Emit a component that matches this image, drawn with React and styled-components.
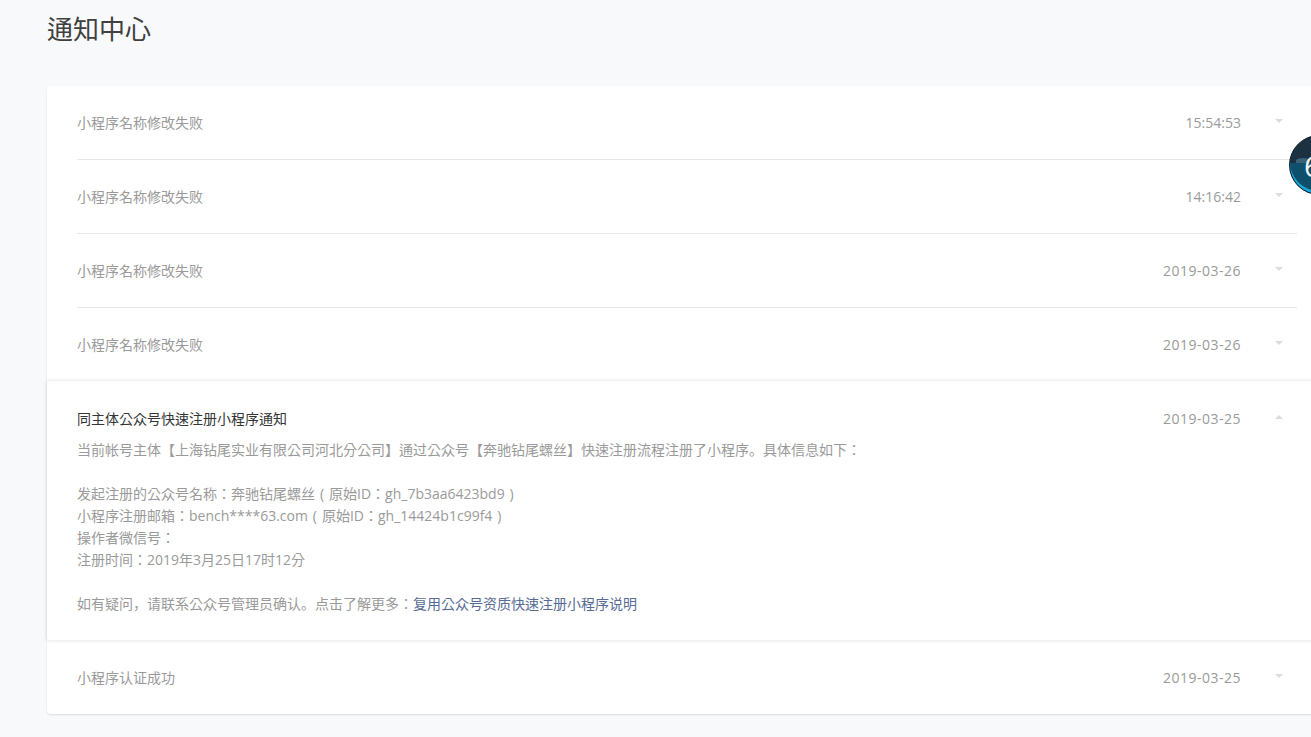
import React from "react";
import styled, { createGlobalStyle } from "styled-components";

const GlobalStyle = createGlobalStyle`
  html, body {
    margin: 0;
    padding: 0;
    height: 100%;
    overflow: hidden;
    background: #f8f9fb;
  }
  body {
    font-family: "Open Sans", "Noto Sans CJK KR", sans-serif;
    font-size: 14px;
    color: #999;
    text-spacing-trim: space-all;
  }
`;

const Page = styled.div`
  position: relative;
  width: 1311px;
  height: 737px;
  overflow: hidden;
  padding-left: 47px;
  box-sizing: border-box;
`;

const Title = styled.h1`
  margin: 0;
  height: 86px;
  padding-top: 11px;
  box-sizing: border-box;
  font-size: 26px;
  line-height: 36px;
  font-weight: 400;
  color: #404040;
`;

const List = styled.div`
  width: 1280px;
  background: #fff;
  border-radius: 4px;
  box-shadow: 0 1px 2px rgba(0, 0, 0, 0.12);
`;

const Item = styled.div`
  padding: 0 30px;
  ${(p) =>
    p.$open &&
    `
    position: relative;
    margin-top: -1px;
    border-radius: 2px;
    box-shadow: 0 0 4px rgba(0, 0, 0, 0.14);
    background: #fff;
  `}
`;

const Head = styled.div`
  height: 74px;
  box-sizing: border-box;
  display: flex;
  align-items: center;
  line-height: 20px;
  border-bottom: 1px solid ${(p) => (p.$line ? "#e7e7eb" : "transparent")};
  padding-top: ${(p) => (p.$low ? "2px" : "0")};
`;

const Name = styled.span`
  flex: 1;
  color: ${(p) => (p.$open ? "#353535" : "#9a9a9a")};
`;

const Time = styled.span`
  color: #9a9a9a;
  margin-right: 33px;
  letter-spacing: ${(p) => (p.$date ? "0.5px" : "0")};
`;

const Arrow = styled.span`
  width: 10px;
  height: 10px;
  margin-right: 13px;
  margin-top: -4px;
  display: flex;
  align-items: center;
  justify-content: center;
  &::before {
    content: "";
    width: 0;
    height: 0;
    border-left: 4px solid transparent;
    border-right: 4px solid transparent;
    ${(p) =>
      p.$up
        ? "border-bottom: 4px solid #dcdcdc;"
        : "border-top: 4px solid #dcdcdc;"}
  }
`;

const Body = styled.div`
  margin-top: -16px;
  padding-bottom: 25px;
  line-height: 22px;
  color: #9a9a9a;
  white-space: pre-line;
`;

const Paren = styled.span`
  display: inline-block;
  width: 14px;
  text-align: center;
`;

const InfoLink = styled.a`
  color: #576b95;
  text-decoration: none;
`;

const Badge = styled.div`
  position: absolute;
  left: 1289px;
  top: 135px;
  width: 60px;
  height: 60px;
  border-radius: 50%;
  overflow: hidden;
  background: linear-gradient(#1c3141 0 47%, #0e4f6c 47% 100%);
  border: 1px solid #0c1c28;
  box-shadow: inset 0 -3px 0 #1aa7d8;
  color: #eef6f9;
  font-size: 30px;
  line-height: 60px;
  padding-left: 14px;
  box-sizing: border-box;
  &::before {
    content: "";
    position: absolute;
    left: 6px;
    top: 22px;
    width: 14px;
    height: 5px;
    border-radius: 50% 50% 0 0;
    background: #3d6273;
  }
  span {
    position: relative;
  }
`;

const rows = [
  { name: "小程序名称修改失败", time: "15:54:53", line: true },
  { name: "小程序名称修改失败", time: "14:16:42", line: true },
  { name: "小程序名称修改失败", time: "2019-03-26", date: true, line: true },
  { name: "小程序名称修改失败", time: "2019-03-26", date: true },
];

export default function App() {
  return (
    <>
      <GlobalStyle />
      <Page>
        <Title>通知中心</Title>
        <List>
          {rows.map((row, i) => (
            <Item key={i}>
              <Head $line={row.line}>
                <Name>{row.name}</Name>
                <Time $date={row.date}>{row.time}</Time>
                <Arrow />
              </Head>
            </Item>
          ))}
          <Item $open>
            <Head $low>
              <Name $open>同主体公众号快速注册小程序通知</Name>
              <Time $date>2019-03-25</Time>
              <Arrow $up />
            </Head>
            <Body>
              {`当前帐号主体【上海钻尾实业有限公司河北分公司】通过公众号【奔驰钻尾螺丝】快速注册流程注册了小程序。具体信息如下：

发起注册的公众号名称：奔驰钻尾螺丝`}
              <Paren>(</Paren>原始ID：gh_7b3aa6423bd9<Paren>)</Paren>
              {`
小程序注册邮箱：bench****63.com`}
              <Paren>(</Paren>原始ID：gh_14424b1c99f4<Paren>)</Paren>
              {`
操作者微信号：
注册时间：2019年3月25日17时12分

如有疑问，请联系公众号管理员确认。点击了解更多：`}
              <InfoLink href="#">复用公众号资质快速注册小程序说明</InfoLink>
            </Body>
          </Item>
          <Item>
            <Head $low>
              <Name>小程序认证成功</Name>
              <Time $date>2019-03-25</Time>
              <Arrow />
            </Head>
          </Item>
        </List>
        <Badge>
          <span>6</span>
        </Badge>
      </Page>
    </>
  );
}
